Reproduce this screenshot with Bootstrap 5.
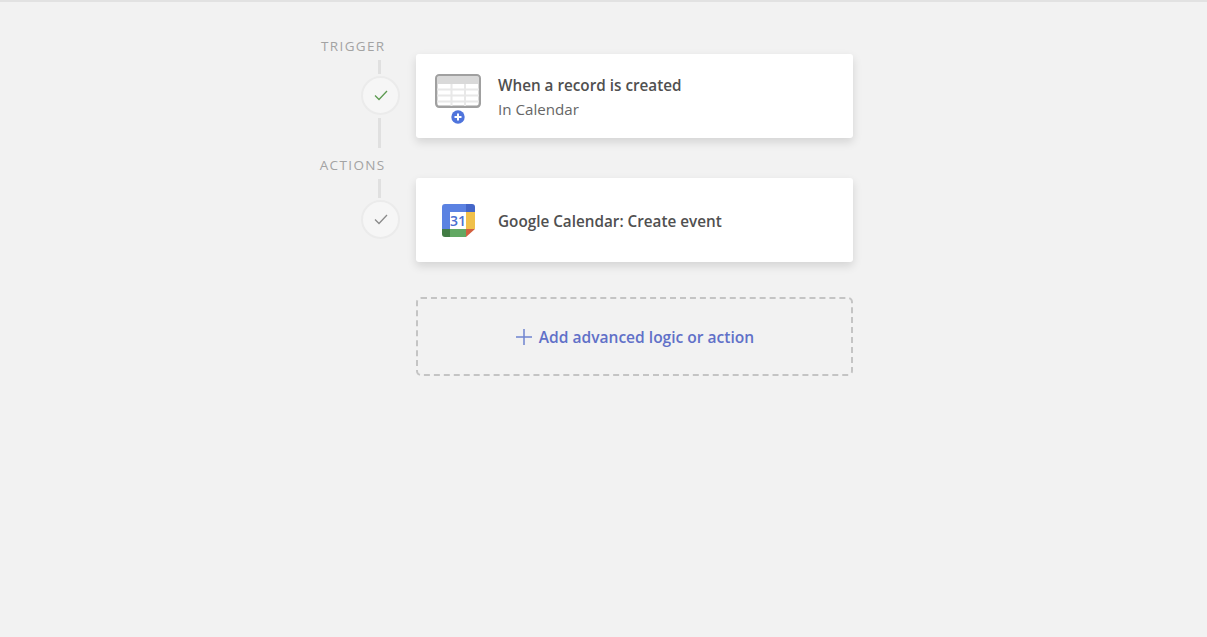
<!DOCTYPE html>
<html lang="en">
<head>
    <meta charset="UTF-8">
    <meta name="viewport" content="width=device-width, initial-scale=1.0">
    <title>Flow steps</title>
    <link href="https://cdn.jsdelivr.net/npm/bootstrap@5.3.0/dist/css/bootstrap.min.css" rel="stylesheet">
    <style>
        body {
            background-color: #f2f2f2;
            border-top: 2px solid #e2e2e2;
            font-family: "Open Sans", "Noto Sans", sans-serif;
            color: #444;
            min-height: 637px;
        }
        .flow-wrap {
            width: 553px;
            margin-left: 300px;
            padding-top: 36px;
        }
        .flow-rail {
            width: 100px;
        }
        .rail-label {
            font-size: 13.5px;
            line-height: 16px;
            letter-spacing: 1.35px;
            color: #a3a3a3;
            margin-right: 14.5px;
        }
        .rail-line {
            width: 3px;
            background-color: #e0e0e0;
            margin-right: 19px;
        }
        .rail-line-a { height: 14px; margin-top: 6px; margin-bottom: 2px; }
        .rail-line-b { height: 30px; margin-top: 3px; margin-bottom: 9px; }
        .rail-line-c { height: 19px; margin-top: 6px; margin-bottom: 2px; }
        .rail-dot {
            width: 39px;
            height: 39px;
            margin-right: .5px;
            border-radius: 50%;
            background-color: #f6f6f6;
            border: 2px solid #ebebeb;
        }
        .rail-dot svg {
            margin-left: 1px;
        }
        .flow-cards {
            width: 437px;
            padding-top: 16px;
        }
        .step-card {
            height: 84px;
            border: 0;
            border-radius: 3px;
            box-shadow: 0 4px 10px rgba(0, 0, 0, .13);
            padding-left: 19px;
        }
        .step-card + .step-card {
            margin-top: 40px;
        }
        .step-icon {
            width: 45px;
            margin-right: 18px;
        }
        .step-icon-table {
            margin-top: 5px;
        }
        .step-icon-cal {
            margin-left: 1px;
        }
        .step-title {
            font-size: 15.27px;
            font-weight: 600;
            line-height: 24px;
            color: #505050;
            padding-top: 2px;
        }
        .step-sub {
            font-size: 15.15px;
            line-height: 24px;
            color: #666;
        }
        .add-box {
            height: 79px;
            margin-top: 35px;
            padding-left: 7px;
            border: 2px dashed #c4c4c4;
            border-radius: 5px;
            background: transparent;
            width: 100%;
            color: #6070c8;
            font-size: 15.55px;
            font-weight: 600;
            gap: 7px;
        }
        .add-box span {
            padding-top: 2px;
        }
    </style>
</head>
<body>
    <div class="flow-wrap d-flex gap-3">
        <!-- left rail with labels and check dots -->
        <div class="flow-rail d-flex flex-column align-items-end">
            <div class="rail-label">TRIGGER</div>
            <div class="rail-line rail-line-a"></div>
            <div class="rail-dot d-flex align-items-center justify-content-center">
                <svg width="14" height="11" viewBox="0 0 14 11" fill="none"><path d="M1 5.5 5 9.5 13 1" stroke="#5c9a50" stroke-width="1.3"/></svg>
            </div>
            <div class="rail-line rail-line-b"></div>
            <div class="rail-label">ACTIONS</div>
            <div class="rail-line rail-line-c"></div>
            <div class="rail-dot d-flex align-items-center justify-content-center">
                <svg width="14" height="11" viewBox="0 0 14 11" fill="none"><path d="M1 5.5 5 9.5 13 1" stroke="#8a8a8a" stroke-width="1.3"/></svg>
            </div>
        </div>

        <div class="flow-cards">
            <div class="card step-card flex-row align-items-center">
                <div class="step-icon">
                    <svg class="d-block step-icon-table" width="46" height="50" viewBox="0 0 46 50">
                        <rect x="1.200" y="1.200" width="43.600" height="31.600" rx="3" fill="#fff" stroke="#a0a0a0" stroke-width="2.400"/>
                        <path d="M2 4a2 2 0 0 1 2-2h38a2 2 0 0 1 2 2v6H2z" fill="#d9d9d9"/>
                        <path d="M2 15.500h42M2 21.500h42M2 27.500h42M16.500 10v22M30 10v22" stroke="#e8e8e8" stroke-width="2"/>
                        <circle cx="23" cy="43" r="6.700" fill="#4f74dc"/>
                        <path d="M23 39.500v7M19.500 43h7" stroke="#fff" stroke-width="2"/>
                    </svg>
                </div>
                <div>
                    <div class="step-title">When a record is created</div>
                    <div class="step-sub">In Calendar</div>
                </div>
            </div>
            <div class="card step-card flex-row align-items-center">
                <div class="step-icon d-flex justify-content-center">
                    <svg class="d-block step-icon-cal" width="33" height="33" viewBox="0 0 33 33">
                        <path d="M3 0h21v8H8v17H0V3a3 3 0 0 1 3-3z" fill="#5b82e2"/>
                        <path d="M24 0h6a3 3 0 0 1 3 3v5h-9z" fill="#4466c8"/>
                        <rect x="24" y="8" width="9" height="17" fill="#f0c04a"/>
                        <path d="M8 25h16v8H8z" fill="#62a863"/>
                        <path d="M0 25h8v8H3a3 3 0 0 1-3-3z" fill="#427c44"/>
                        <path d="M24 25h9l-9 8z" fill="#d2603f"/>
                        <rect x="8" y="8" width="16" height="17" fill="#fff"/>
                        <text x="16" y="21.500" text-anchor="middle" font-family="Open Sans, sans-serif" font-size="14" font-weight="600" fill="#4a6fd0">31</text>
                    </svg>
                </div>
                <div class="step-title">Google Calendar: Create event</div>
            </div>
            <button type="button" class="add-box d-flex align-items-center justify-content-center">
                <svg width="16" height="16" viewBox="0 0 16 16" fill="none"><path d="M8 0v16M0 8h16" stroke="#6f84cf" stroke-width="1.500"/></svg>
                <span>Add advanced logic or action</span>
            </button>
        </div>
    </div>

    <script src="https://cdn.jsdelivr.net/npm/bootstrap@5.3.0/dist/js/bootstrap.bundle.min.js"></script>
</body>
</html>
